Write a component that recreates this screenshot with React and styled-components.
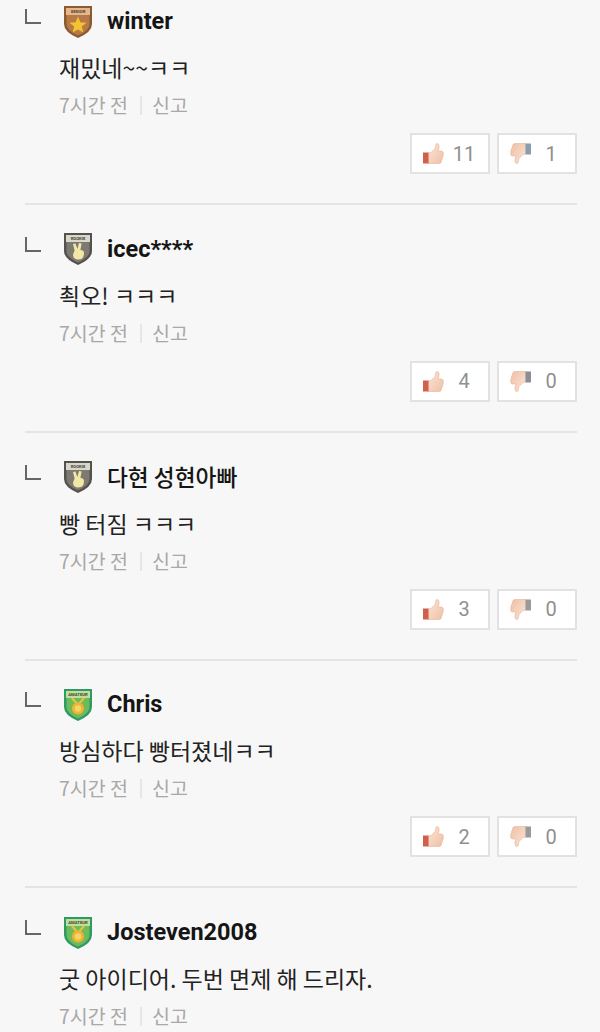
import React from "react";
import styled, { createGlobalStyle } from "styled-components";

const Global = createGlobalStyle`
  html, body { margin: 0; padding: 0; background: #f7f7f7; height: 1032px; overflow: hidden; }
  * { box-sizing: border-box; }
`;
const Page = styled.main`
  height: 1032px; overflow: hidden; padding: 4px 23px 0 25px; background: #f7f7f7;
  font-family: Roboto, "Noto Sans CJK KR", sans-serif; -webkit-font-smoothing: antialiased;
`;
const Item = styled.article`margin-bottom: 26.75px;`;
const Header = styled.header`height: 34px; display: flex; align-items: center;`;
const Corner = styled.span`
  width: 16px; height: 15px; margin: -9px 22px 0 0; flex: none;
  border-left: 2px solid #666; border-bottom: 2px solid #666;
`;
const Badge = styled.svg`width: 30px; height: 33px; flex: none; margin-right: 14px;`;
const Name = styled.strong`color: #151515;
  font-family: ${p => (p.$ko ? '"Noto Sans CJK KR"' : "Roboto")}, sans-serif;
  font-size: ${p => (p.$ko ? "22.7px" : "23.5px")}; font-weight: ${p => (p.$ko ? 500 : 700)};`;
const Body = styled.p`margin: 14px 0 0 34px; font: 400 23px/30px "Noto Sans CJK KR", sans-serif; color: #222;`;
const Meta = styled.div`margin: 11px 0 0 34px; height: 24px; display: flex; align-items: center;
  font: 400 19.5px/24px "Noto Sans CJK KR", sans-serif; color: #a8a8a8;`;
const Sep = styled.i`width: 2px; height: 19px; background: #e6e6e6; margin: 1px 10px 0 12px;`;
const Actions = styled.div`margin-top: 16px; height: 41px; display: flex; justify-content: flex-end; gap: 7px;`;
const VoteButton = styled.button`
  width: 80px; height: 41px; padding: 0 0 0 11px; display: flex; align-items: center; background: #fff;
  border: 2px solid #e2e2e2; border-radius: 0; color: #8f8f8f; font: 400 20px/1 Roboto, sans-serif;
`;
const Count = styled.span`flex: 1; text-align: center; padding: 0 6px 0 2px;`;
const Divider = styled.hr`margin: 29px 0 0; border: 0; height: 2px; background: #e4e4e4;`;

const Thumb = ({ down, cuff }) => {
  const id = down ? "gd" : "gu";
  return (
    <svg width="21" height="23" viewBox="0 0 21 23" aria-hidden="true" style={{ flex: "none" }}>
      <defs>
        <linearGradient id={id} x1="0" y1="0" x2="1" y2="1">
          <stop offset="0" stopColor="#fbe6d8" />
          <stop offset="1" stopColor="#efbfa4" />
        </linearGradient>
      </defs>
      <g transform={down ? "rotate(180 10.5 11.5)" : undefined}>
        <path d="M5 11 L8 10.5 L12 6.5 L13 2 Q15 .5 16 3 Q16.5 6 15 9 L19 9 Q21 10 20.2 12 Q20.6 14 19.6 15 Q19.8 17 18.6 18 Q18.6 21.5 16 21.5 L5 21.5 Z" fill={`url(#${id})`} stroke="#e2a98a" strokeWidth=".5" />
        <rect x="0" y="10.5" width="5.5" height="11" fill={cuff} />
      </g>
    </svg>
  );
};

const Shield = ({ kind }) => {
  const t = {
    senior: { o: "#8d5a30", i: "#b57a47", b: "#e9b68c", l: "SENIOR" },
    rookie: { o: "#55524d", i: "#7d7a72", b: "#d9d6cc", l: "ROOKIE" },
    amateur: { o: "#2f9a63", i: "#6dbb5a", b: "#bfe09a", l: "AMATEUR" },
  }[kind];
  return (
    <Badge viewBox="0 0 30 33" aria-hidden="true">
      <path d="M1 1 H29 V19 Q29 27 15 33 Q1 27 1 19 Z" fill={t.o} />
      <path d="M3.5 10 H26.5 V19 Q26.5 25.5 15 30.5 Q3.5 25.5 3.5 19 Z" fill={t.i} />
      <rect x="3" y="3" width="24" height="7" fill={t.b} />
      <text x="15" y="8.2" textAnchor="middle" fontSize="4.2" fontWeight="700" fontFamily="Roboto" fill="#443">{t.l}</text>
      {kind === "senior" && (
        <polygon points="15,11.5 17.4,17.2 23.5,17.7 18.8,21.6 20.3,27.5 15,24.4 9.7,27.5 11.2,21.6 6.5,17.7 12.6,17.2" fill="#f2c230" />
      )}
      {kind === "rookie" && (
        <path d="M10 12 L12.4 11.5 L14.4 17 L16 11 L18.6 11.6 L17.4 18 Q21 18 21 21 Q21 27.5 15.5 27.5 Q10 27.5 10 22.5 L11.6 18.5 Z" fill="#f3e7a8" />
      )}
      {kind === "amateur" && (
        <g>
          <path d="M9 10 L15 17 L21 10" fill="none" stroke="#eec23c" strokeWidth="2" />
          <circle cx="15" cy="20.5" r="6" fill="#f0b433" />
          <circle cx="15" cy="20.5" r="3.2" fill="#f7d469" />
        </g>
      )}
    </Badge>
  );
};

const data = [
  { kind: "senior", name: "winter", body: "재밌네~~ㅋㅋ", up: 11, down: 1, dc: "#8b9bb0" },
  { kind: "rookie", name: "icec****", body: "쵝오! ㅋㅋㅋ", up: 4, down: 0, dc: "#8a8f96" },
  { kind: "rookie", name: "다현 성현아빠", ko: true, body: "빵 터짐 ㅋㅋㅋ", up: 3, down: 0, dc: "#9a9a9a" },
  { kind: "amateur", name: "Chris", body: "방심하다 빵터졌네ㅋㅋ", up: 2, down: 0, dc: "#9a9a9a" },
  { kind: "amateur", name: "Josteven2008", body: "굿 아이디어. 두번 면제 해 드리자." },
];

export default function App() {
  return (
    <Page>
      <Global />
      {data.map((c) => (
        <Item key={c.name}>
          <Header>
            <Corner />
            <Shield kind={c.kind} />
            <Name $ko={c.ko}>{c.name}</Name>
          </Header>
          <Body>{c.body}</Body>
          <Meta>7시간 전<Sep />신고</Meta>
          {c.up !== undefined && (
            <>
              <Actions>
                <VoteButton><Thumb cuff="#d0604c" /><Count>{c.up}</Count></VoteButton>
                <VoteButton><Thumb down cuff={c.dc} /><Count>{c.down}</Count></VoteButton>
              </Actions>
              <Divider />
            </>
          )}
        </Item>
      ))}
    </Page>
  );
}
